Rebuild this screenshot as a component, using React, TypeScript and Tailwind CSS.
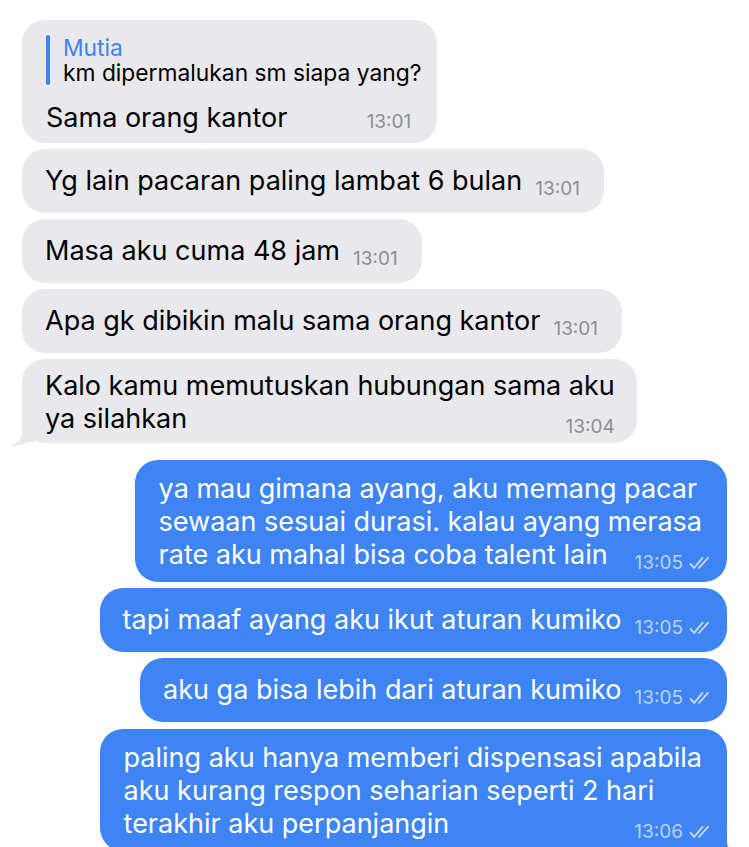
import React from "react";

const IN_BG = "bg-[#e9e9ed]";
const OUT_BG = "bg-[#3f84f3]";

function Checks() {
  return (
    <svg width="23" height="14" viewBox="0 0 23 14" fill="none" className="shrink-0">
      <path d="M1.5 8 L5.2 11.8 L13.5 1.8" stroke="#c2d8fc" strokeWidth="1.9" strokeLinecap="round" strokeLinejoin="round" />
      <path d="M10 11.8 L19 1.8" stroke="#c2d8fc" strokeWidth="1.9" strokeLinecap="round" strokeLinejoin="round" />
    </svg>
  );
}

function InTime({ t }: { t: string }) {
  return (
    <span className="shrink-0 text-[19px] leading-[22px] text-[#8e8e93] translate-y-[3px] whitespace-nowrap">{t}</span>
  );
}

function OutTime({ t }: { t: string }) {
  return (
    <span className="shrink-0 flex items-center gap-[6px] translate-y-[3px]">
      <span className="text-[19px] leading-[22px] text-[#b9d2fb] whitespace-nowrap">{t}</span>
      <Checks />
    </span>
  );
}

function InTail() {
  return (
    <svg className="absolute left-[-12px] bottom-[-3px]" width="24" height="24" viewBox="0 0 24 24">
      <path d="M12 0 L12 12 Q12 20 0 24 Q10 24 18 20 L24 20 L24 0 Z" fill="#e9e9ed" />
    </svg>
  );
}

function OutTail() {
  return (
    <svg className="absolute right-[-12px] bottom-[-3px]" width="24" height="24" viewBox="0 0 24 24">
      <path d="M12 0 L12 12 Q12 20 24 24 Q14 24 6 20 L0 20 L0 0 Z" fill="#3f84f3" />
    </svg>
  );
}

const TXT = "text-[27px] leading-[33px] whitespace-nowrap";

function InSingle({ text, t }: { text: string; t: string }) {
  return (
    <div className={`self-start ml-[22px] ${IN_BG} rounded-[23px] pl-[23px] pr-[24px] pt-[15px] pb-[16px] flex items-end gap-[13px]`}>
      <span className={`${TXT} text-black`}>{text}</span>
      <InTime t={t} />
    </div>
  );
}

function OutSingle({ text, t }: { text: string; t: string }) {
  return (
    <div className={`self-end mr-[22px] ${OUT_BG} rounded-[23px] pl-[23px] pr-[15px] pt-[15px] pb-[16px] flex items-end gap-[13px]`}>
      <span className={`${TXT} text-white`}>{text}</span>
      <OutTime t={t} />
    </div>
  );
}

function OutMulti({ lines, t, tail, extra }: { lines: string[]; t: string; tail?: boolean; extra?: string }) {
  const last = lines[lines.length - 1];
  return (
    <div className={`relative self-end mr-[22px] ${OUT_BG} rounded-[23px] pl-[24px] pr-[15px] pt-[12px] pb-[11px] flex flex-col ${extra ?? ""}`}>
      {lines.slice(0, -1).map((l) => (
        <div key={l} className={`${TXT} text-white pr-[10px]`}>{l}</div>
      ))}
      <div className="flex items-end justify-between gap-[13px]">
        <span className={`${TXT} text-white`}>{last}</span>
        <OutTime t={t} />
      </div>
      {tail && <OutTail />}
    </div>
  );
}

export default function App() {
  return (
    <div className="w-[749px] h-[847px] bg-white overflow-hidden flex flex-col pt-[20px] gap-[6px] font-['Inter',sans-serif] antialiased">
      {/* reply bubble */}
      <div className={`self-start ml-[22px] ${IN_BG} rounded-[23px] pl-[24px] pr-[16px] pt-[15px] pb-[9px] flex flex-col`}>
        <div className="flex gap-[13px] pb-[6px]">
          <div className="w-[4px] rounded-full bg-[#3f84f3]" />
          <div className="flex flex-col">
            <span className="text-[22.8px] leading-[25px] text-[#3e83f4]">Mutia</span>
            <span className="text-[22.8px] leading-[25px] text-black whitespace-nowrap">km dipermalukan sm siapa yang?</span>
          </div>
        </div>
        <div className="flex items-end justify-between gap-[13px] mt-[10px]">
          <span className={`${TXT} text-black`}>Sama orang kantor</span>
          <span className="mr-[10px]"><InTime t="13:01" /></span>
        </div>
      </div>

      <InSingle text="Yg lain pacaran paling lambat 6 bulan" t="13:01" />
      <InSingle text="Masa aku cuma 48 jam" t="13:01" />
      <InSingle text="Apa gk dibikin malu sama orang kantor" t="13:01" />

      <div className={`relative self-start ml-[22px] ${IN_BG} rounded-[23px] pl-[23px] pr-[22px] pt-[10px] pb-[8px] flex flex-col`}>
        <div className={`${TXT} text-black`}>Kalo kamu memutuskan hubungan sama aku</div>
        <div className="flex items-end justify-between gap-[13px]">
          <span className={`${TXT} text-black`}>ya silahkan</span>
          <InTime t="13:04" />
        </div>
        <InTail />
      </div>

      <OutMulti
        lines={["ya mau gimana ayang, aku memang pacar", "sewaan sesuai durasi. kalau ayang merasa", "rate aku mahal bisa coba talent lain"]}
        t="13:05"
        extra="mt-[11px]"
      />
      <OutSingle text="tapi maaf ayang aku ikut aturan kumiko" t="13:05" />
      <OutSingle text="aku ga bisa lebih dari aturan kumiko" t="13:05" />
      <OutMulti
        lines={["paling aku hanya memberi dispensasi apabila", "aku kurang respon seharian seperti 2 hari", "terakhir aku perpanjangin"]}
        t="13:06"
        tail
        extra="mt-[1px]"
      />
    </div>
  );
}
